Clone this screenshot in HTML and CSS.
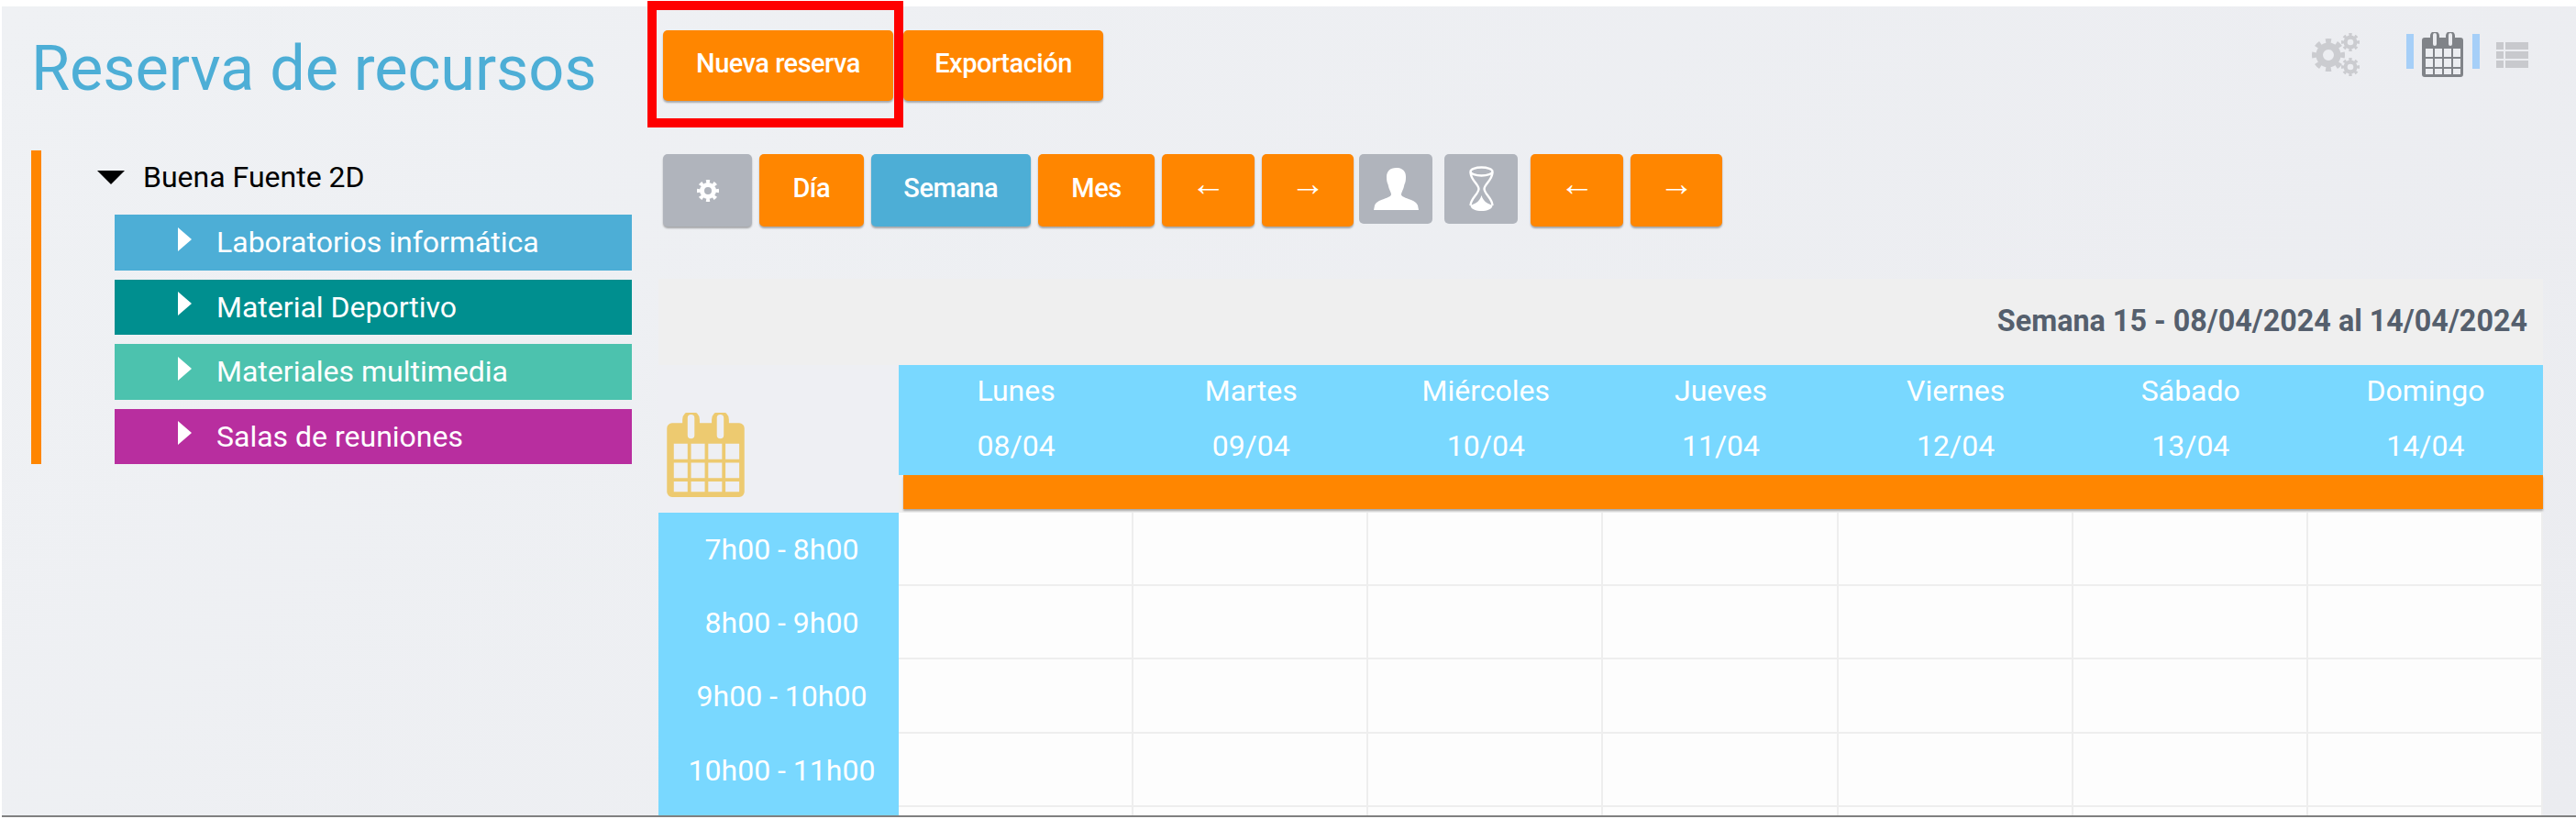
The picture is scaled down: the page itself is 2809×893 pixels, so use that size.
FILE: index.html
```html
<!DOCTYPE html>
<html lang="es">
<head>
    <meta charset="UTF-8">
    <meta name="viewport" content="width=device-width, initial-scale=1.0">
    <title>Reserva de recursos</title>
    <link rel="stylesheet" href="styles.css">
</head>
<body>
<svg class="defs" width="0" height="0">
    <symbol id="cal" viewBox="0 0 45 49">
        <path fill-rule="evenodd" d="M3 6h6V4a5 5 0 0 1 10 0v2h7V4a5 5 0 0 1 10 0v2h6a3 3 0 0 1 3 3v37a3 3 0 0 1-3 3H3a3 3 0 0 1-3-3V9a3 3 0 0 1 3-3zM12 3v10a2 2 0 0 0 4 0V3a2 2 0 0 0-4 0zM29 3v10a2 2 0 0 0 4 0V3a2 2 0 0 0-4 0zM4 18v9h8v-9zM14 18v9h8v-9zM24 18v9h8v-9zM34 18v9h8v-9zM4 29v9h8v-9zM14 29v9h8v-9zM24 29v9h8v-9zM34 29v9h8v-9zM4 40v6h8v-6zM14 40v6h8v-6zM24 40v6h8v-6zM34 40v6h8v-6z"/>
    </symbol>
    <symbol id="gear" viewBox="0 0 24 24" fill="none" stroke="currentColor">
        <circle cx="12" cy="12" r="6.5" stroke-width="5"/>
        <circle cx="12" cy="12" r="10" stroke-width="4" pathLength="16" stroke-dasharray="1 1" stroke-dashoffset="0.5"/>
    </symbol>
</svg>

<div class="page">
    <div class="highlight"></div>

    <div class="side">
        <h1 class="page-title">Reserva de recursos</h1>
        <div class="tree">
            <div class="tree-root"><span class="caret-down"></span>Buena Fuente 2D</div>
            <div class="tree-item blue"><span class="caret-right"></span>Laboratorios informática</div>
            <div class="tree-item teal"><span class="caret-right"></span>Material Deportivo</div>
            <div class="tree-item mint"><span class="caret-right"></span>Materiales multimedia</div>
            <div class="tree-item purple"><span class="caret-right"></span>Salas de reuniones</div>
        </div>
    </div>

    <div class="main">
        <div class="top-row">
            <a class="btn orange w-new">Nueva reserva</a>
            <a class="btn orange w-export">Exportación</a>
            <div class="view-icons">
                <svg class="gears" viewBox="0 0 52 47">
                    <use href="#gear" x="0" y="6" width="36" height="36"/>
                    <use href="#gear" x="32" y="0" width="20" height="20"/>
                    <use href="#gear" x="32" y="27" width="20" height="20"/>
                </svg>
                <span class="view-bar first"></span>
                <svg class="view-cal"><use href="#cal"/></svg>
                <span class="view-bar"></span>
                <div class="view-list">
                    <span></span><span></span>
                    <span></span><span></span>
                    <span></span><span></span>
                </div>
            </div>
        </div>

        <div class="nav-row">
            <a class="btn grey gear-btn"><svg class="btn-gear"><use href="#gear"/></svg></a>
            <a class="btn orange w-day">Día</a>
            <a class="btn blue w-week">Semana</a>
            <a class="btn orange w-month">Mes</a>
            <a class="btn orange arrow">←</a>
            <a class="btn orange arrow">→</a>
            <a class="btn grey square user-btn">
                <svg width="49" height="46" viewBox="0 0 49 46"><path fill="#fff" d="M24.500 0c-7 0-10.500 4-10.500 10 0 4 .5 6 1.500 8l1 4c1 3 2.500 5 2.500 7 0 2-3 3-8 5-6 2-9 4-10 7l-1 5h49l-1-5c-1-3-4-5-10-7-5-2-8-3-8-5 0-2 1.500-4 2.500-7l1-4c1-2 1.500-4 1.500-8 0-6-3.500-10-10.500-10z"/></svg>
            </a>
            <a class="btn grey square glass-btn">
                <svg width="27" height="50" viewBox="0 0 27 50" fill="none" stroke="#fff" stroke-width="2.400"><ellipse cx="13.500" cy="6" rx="12" ry="4.500"/><path d="M1.500 7C2 16 10 19 10.500 25 10 31 2 35 1.500 43M25.500 7C25 16 17 19 16.500 25 17 31 25 35 25.500 43"/><path fill="#fff" stroke="none" d="M1.500 43C6 41 11 40 13.500 32 16 40 21 41 25.500 43 25 51 2 51 1.500 43z"/></svg>
            </a>
            <a class="btn orange arrow">←</a>
            <a class="btn orange arrow">→</a>
        </div>

        <div class="calendar">
            <div class="week-title">Semana 15 - 08/04/2024 al 14/04/2024</div>
            <div class="cal-grid">
                <div class="corner"><svg class="corner-icon"><use href="#cal"/></svg></div>
                <div class="day-head"><span>Lunes</span><span>08/04</span></div>
                <div class="day-head"><span>Martes</span><span>09/04</span></div>
                <div class="day-head"><span>Miércoles</span><span>10/04</span></div>
                <div class="day-head"><span>Jueves</span><span>11/04</span></div>
                <div class="day-head"><span>Viernes</span><span>12/04</span></div>
                <div class="day-head"><span>Sábado</span><span>13/04</span></div>
                <div class="day-head"><span>Domingo</span><span>14/04</span></div>
                <div class="orange-strip"></div>

                <div class="hour">7h00 - 8h00</div>
                <div class="cell"></div><div class="cell"></div><div class="cell"></div><div class="cell"></div><div class="cell"></div><div class="cell"></div><div class="cell"></div>
                <div class="hour">8h00 - 9h00</div>
                <div class="cell"></div><div class="cell"></div><div class="cell"></div><div class="cell"></div><div class="cell"></div><div class="cell"></div><div class="cell"></div>
                <div class="hour">9h00 - 10h00</div>
                <div class="cell"></div><div class="cell"></div><div class="cell"></div><div class="cell"></div><div class="cell"></div><div class="cell"></div><div class="cell"></div>
                <div class="hour">10h00 - 11h00</div>
                <div class="cell"></div><div class="cell"></div><div class="cell"></div><div class="cell"></div><div class="cell"></div><div class="cell"></div><div class="cell"></div>
                <div class="hour"></div>
                <div class="cell"></div><div class="cell"></div><div class="cell"></div><div class="cell"></div><div class="cell"></div><div class="cell"></div><div class="cell"></div>
            </div>
        </div>
    </div>
</div>
<div class="bottom-line"></div>
</body>
</html>
```

FILE: styles.css
```css
body {
    margin: 0;
    padding: 7px 0 0 2px;
    background: white;
    font-family: 'Roboto', 'Liberation Sans', sans-serif;
    overflow: hidden;
}

.defs {
    position: absolute;
}

.page {
    position: relative;
    display: flex;
    height: 882px;
    overflow: hidden;
    background: linear-gradient(135deg, #eff1f4 0%, #ebecf0 100%);
}

/* red annotation box round the first button */
.highlight {
    position: fixed;
    left: 706px;
    top: 1px;
    width: 259px;
    height: 118px;
    border: 10px solid #fe0000;
    z-index: 5;
}

.side {
    width: 716px;
    flex: none;
}

.page-title {
    margin: 30px 0 51px 32px;
    font-size: 68.5px;
    line-height: 76px;
    font-weight: 400;
    letter-spacing: -0.1px;
    color: #4daed6;
}

.tree {
    margin-left: 32px;
    padding-left: 61px;
    border-left: 11px solid #ff8600;
    box-sizing: border-box;
    width: 655px;
}

.tree-root {
    display: flex;
    align-items: center;
    height: 70px;
    padding-bottom: 12px;
    box-sizing: border-box;
    font-size: 32px;
    color: #000;
}

.caret-down {
    width: 0;
    height: 0;
    margin-right: 20px;
    border-left: 15px solid transparent;
    border-right: 15px solid transparent;
    border-top: 15px solid #000;
}

.tree-item {
    display: flex;
    align-items: center;
    height: 60.5px;
    margin: 0 0 10px 19px;
    padding-left: 69px;
    font-size: 32px;
    color: white;
}

.tree-item:last-child {
    margin-bottom: 0;
}

.caret-right {
    width: 0;
    height: 0;
    margin: -7px 27px 0 0;
    border-top: 13px solid transparent;
    border-bottom: 13px solid transparent;
    border-left: 15px solid white;
}

.tree-item.blue { background: #4daed6; }
.tree-item.teal { background: #008f8f; }
.tree-item.mint { background: #4cc2ae; }
.tree-item.purple { background: #b82e9f; }

.main {
    flex: 1;
    padding-right: 36px;
}

.top-row {
    display: flex;
    gap: 11px;
    margin: 26px 0 58px 5px;
}

.nav-row {
    display: flex;
    gap: 8px;
    margin: 0 0 57px 5px;
}

.btn {
    display: flex;
    align-items: center;
    justify-content: center;
    height: 77px;
    padding-bottom: 5px;
    box-sizing: border-box;
    border-radius: 5px;
    font-size: 29px;
    font-weight: 500;
    letter-spacing: -0.5px;
    color: white;
    box-shadow: 0 2px 2px rgba(0,0,0,0.3);
}

.nav-row .btn {
    height: 79px;
}

.w-new { width: 251px; }
.w-export { width: 218px; }
.w-day { width: 113.5px; }
.w-week { width: 174.5px; }
.w-month { width: 127px; }

.btn.orange { background: #ff8600; }
.btn.blue { background: #4daed6; }
.btn.grey { background: #b0b4bc; }

.btn.arrow {
    width: 100.5px;
    padding: 0 0 15px;
    font-family: 'Liberation Sans', sans-serif;
    font-size: 38px;
    font-weight: 400;
}

.gear-btn {
    width: 97px;
    padding: 0;
}

.btn-gear {
    width: 24px;
    height: 24px;
    color: white;
}

.nav-row .btn.square {
    width: 80px;
    height: 76px;
    padding: 0;
    box-shadow: none;
}

.user-btn {
    margin-left: -2px;
}

.glass-btn {
    margin: 0 6px 0 5px;
}

.view-icons {
    display: flex;
    align-items: center;
    height: 49px;
    margin: 2px 16px 0 auto;
}

.gears {
    width: 52px;
    height: 47px;
    margin-right: 51px;
    color: #cbccd0;
}

.view-bar {
    width: 8px;
    height: 38px;
    margin-top: -7px;
    background: #a6cff8;
}

.view-bar.first {
    margin-right: 9px;
}

.view-cal {
    width: 45px;
    height: 49px;
    margin-right: 10px;
    fill: #808388;
}

.view-list {
    display: grid;
    grid-template-columns: 8px 25px;
    grid-auto-rows: 8px;
    gap: 2px;
    margin-left: 18px;
}

.view-list span {
    background: #c8c9cd;
}

.calendar {
    background: #efefef;
    height: 600px;
}

.week-title {
    height: 94px;
    padding: 28px 17px 0 0;
    box-sizing: border-box;
    text-align: right;
    font-size: 32.3px;
    line-height: 36px;
    font-weight: 700;
    color: #555f6d;
}

.cal-grid {
    display: grid;
    grid-template-columns: 262px repeat(7, 1fr);
    grid-template-rows: 120px 41px 79.5px repeat(4, 80.5px);
}

.corner {
    grid-row: 1 / 3;
    display: flex;
    align-items: flex-end;
    padding: 0 0 17px 9px;
    background: #eeeff3;
}

.corner-icon {
    width: 85px;
    height: 92px;
    fill: #edca70;
}

.day-head {
    display: flex;
    flex-direction: column;
    align-items: center;
    background: #79d8ff;
    color: white;
    font-size: 32px;
    line-height: 60px;
}

.day-head span:first-child {
    margin-top: -2px;
}

.orange-strip {
    grid-column: 2 / 9;
    height: 37px;
    margin-left: 5px;
    background: #ff8600;
    box-shadow: 0 2px 2px rgba(0,0,0,0.3);
    position: relative;
}

.hour {
    display: flex;
    align-items: center;
    justify-content: center;
    padding-left: 7px;
    background: #79d8ff;
    color: white;
    font-size: 32px;
}

.cell {
    background: #fdfdfd;
    border-right: 2px solid #eeeeee;
    border-bottom: 2px solid #eeeeee;
    box-sizing: border-box;
}

.bottom-line {
    height: 2px;
    background: #808080;
}
```
